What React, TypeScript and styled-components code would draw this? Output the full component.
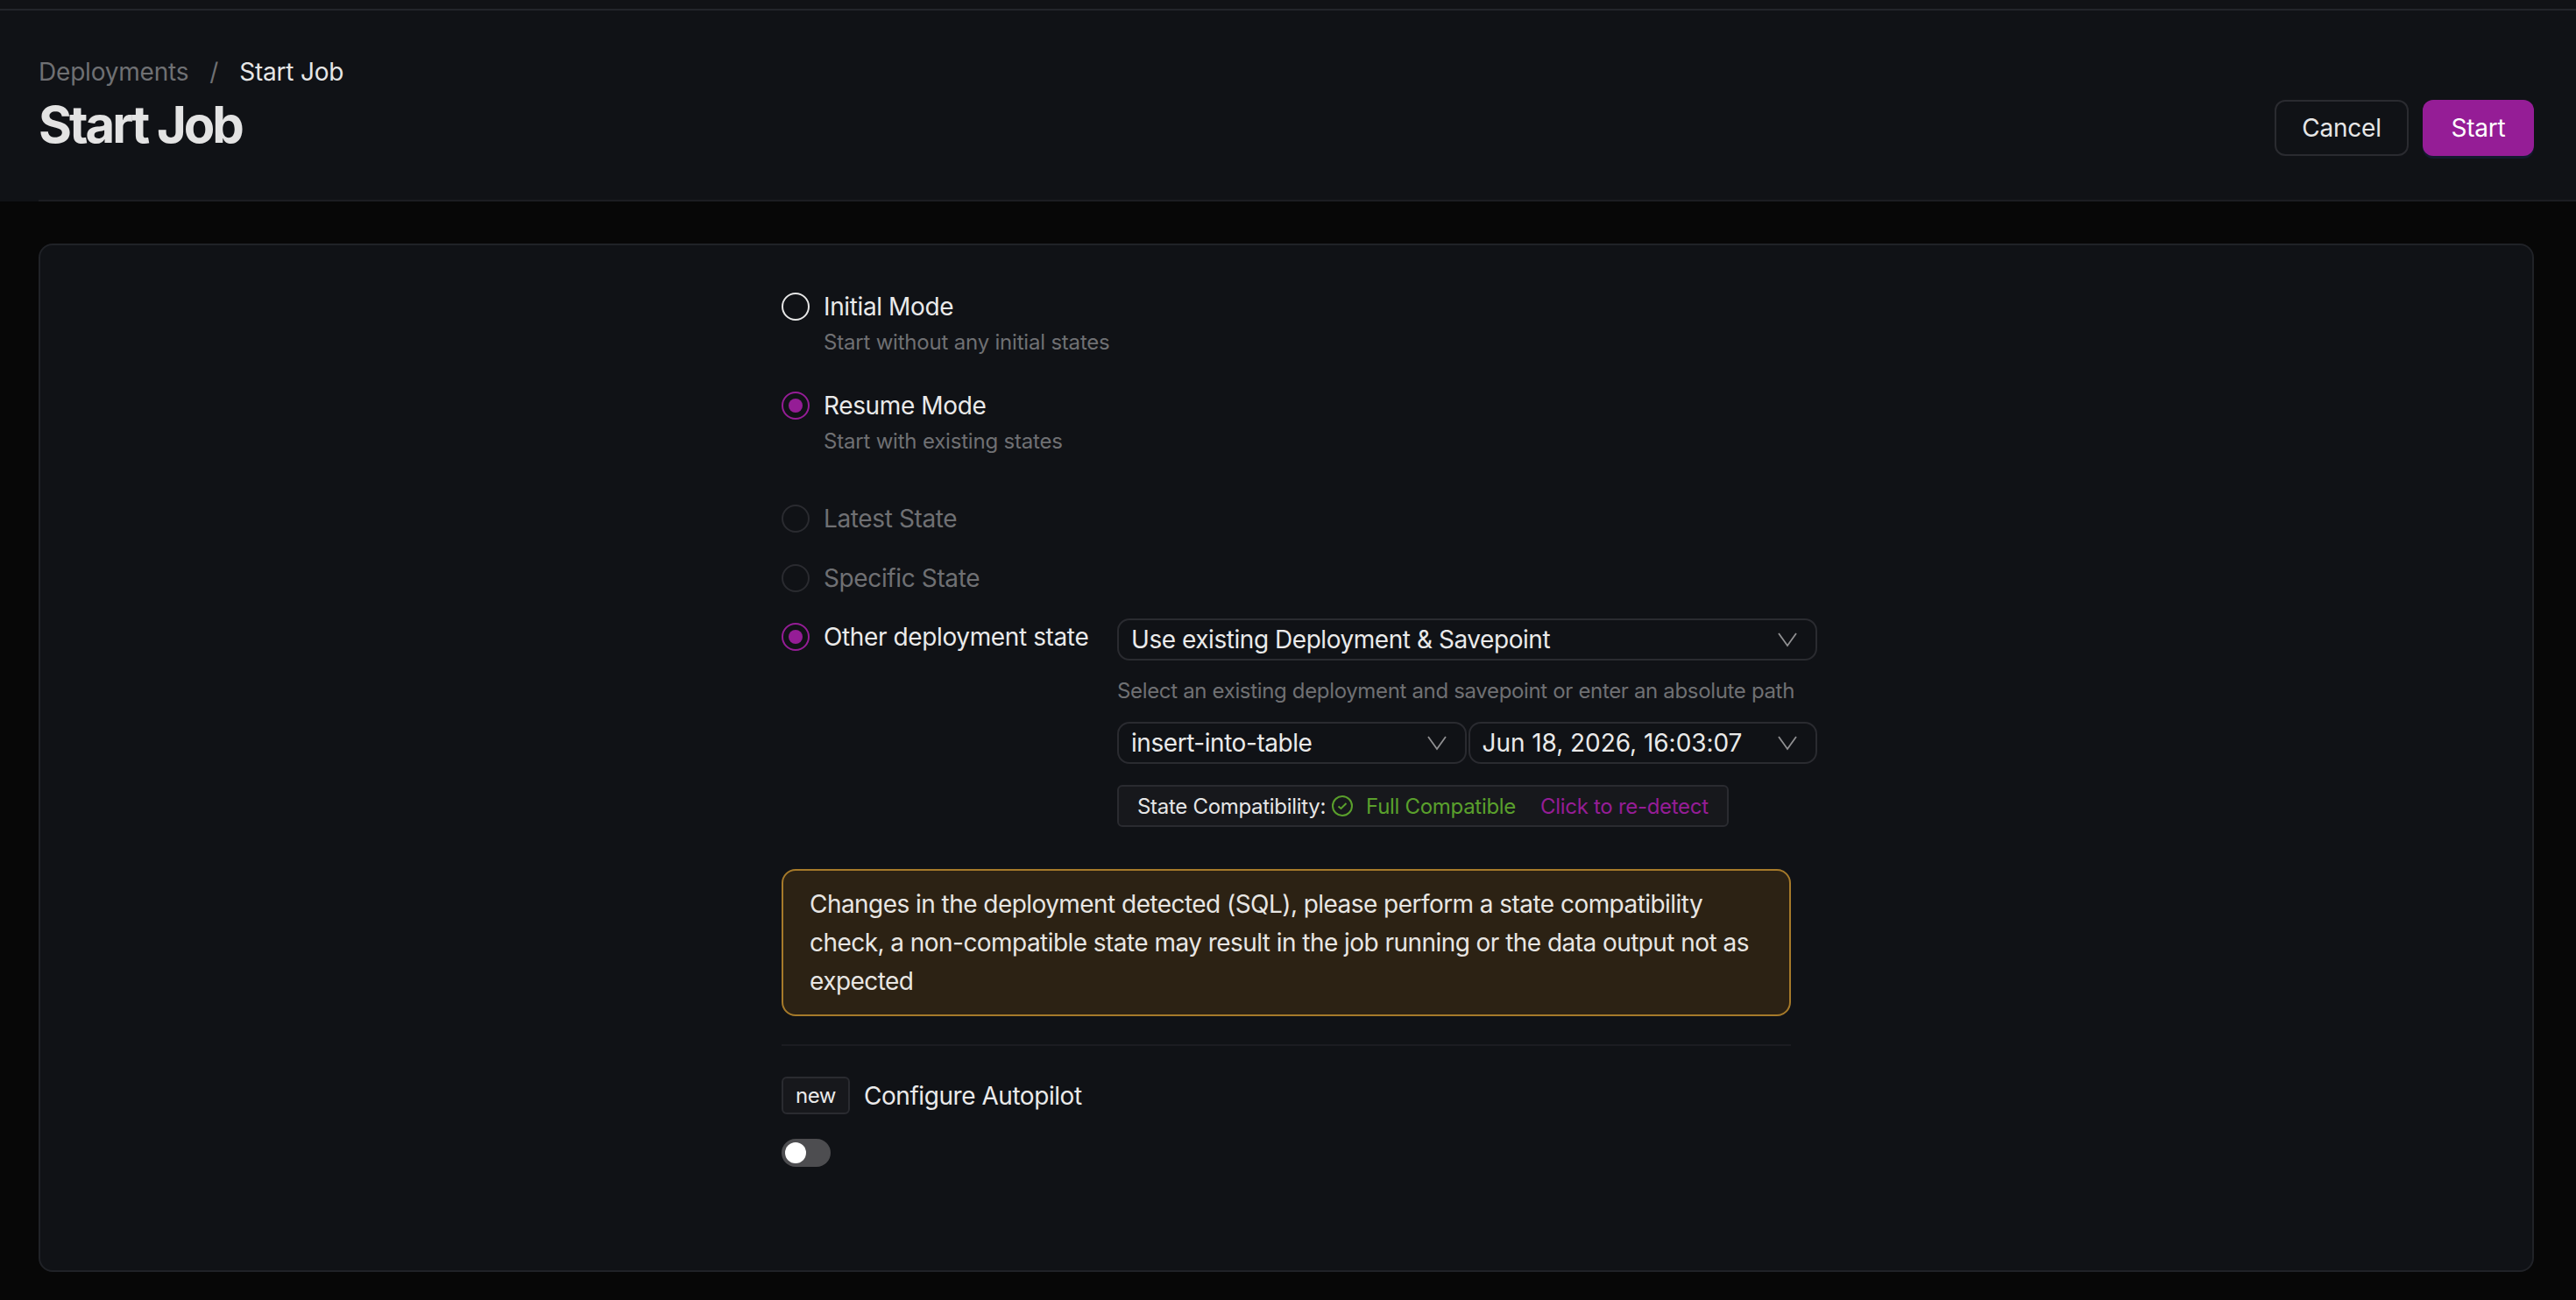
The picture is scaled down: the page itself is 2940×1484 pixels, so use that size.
import styled, { createGlobalStyle } from "styled-components";

const purple = "#951d96";
const borderColor = "#2a2b30";
const muted = "#6f7073";

const GlobalStyle = createGlobalStyle`
  html, body {
    margin: 0;
    padding: 0;
    background: #070707;
  }
  * {
    box-sizing: border-box;
  }
`;

const Page = styled.div`
  width: 2940px;
  height: 1484px;
  display: flex;
  flex-direction: column;
  overflow: hidden;
  background: #070707;
  color: #e6e6e6;
  font-family: Inter, "Liberation Sans", sans-serif;
  letter-spacing: -0.2px;
`;

const TopStrip = styled.div`
  flex: none;
  height: 12px;
  background: #111216;
  border-bottom: 2px solid #23252b;
`;

const Header = styled.header`
  flex: none;
  height: 218px;
  background: #101216;
  padding-left: 44px;
`;

const HeaderInner = styled.div`
  height: 100%;
  display: flex;
  align-items: flex-start;
  justify-content: space-between;
  padding: 50px 48px 0 0;
  border-bottom: 2px solid #1c1d22;
`;

const TitleBlock = styled.div`
  display: flex;
  flex-direction: column;
`;

const Breadcrumb = styled.div`
  display: flex;
  align-items: center;
  height: 40px;
  font-size: 28px;
`;

const Crumb = styled.span<{ $current?: boolean }>`
  color: ${(p) => (p.$current ? "#e6e6e6" : muted)};
`;

const CrumbSep = styled.span`
  color: ${muted};
  margin: 0 24px;
`;

const Title = styled.h1`
  margin: 4px 0 0;
  font-size: 58px;
  line-height: 72px;
  font-weight: 700;
  letter-spacing: -3px;
  color: #e3e3e3;
`;

const Actions = styled.div`
  display: flex;
  gap: 16px;
  margin-top: 52px;
`;

const Button = styled.button<{ $primary?: boolean }>`
  height: 64px;
  padding: 0;
  width: ${(p) => (p.$primary ? "127px" : "153px")};
  border-radius: 12px;
  font-family: inherit;
  font-size: 28px;
  letter-spacing: -0.2px;
  color: ${(p) => (p.$primary ? "#ffffff" : "#e6e6e6")};
  background: ${(p) => (p.$primary ? purple : "transparent")};
  border: ${(p) => (p.$primary ? "none" : `2px solid ${borderColor}`)};
  box-shadow: ${(p) => (p.$primary ? "0 3px 0 #131a2e" : "none")};
`;

const Main = styled.main`
  flex: 1;
  display: flex;
  min-height: 0;
  padding: 48px 48px 32px 44px;
`;

const Card = styled.section`
  flex: 1;
  background: #101216;
  border: 2px solid #202227;
  border-radius: 16px;
  padding-top: 48px;
`;

const Form = styled.div`
  width: 1152px;
  margin: 0 auto;
`;

const OptionRow = styled.label<{ $gap?: number }>`
  display: flex;
  align-items: center;
  height: 44px;
  margin-top: ${(p) => p.$gap ?? 0}px;
`;

const Radio = styled.span<{ $state: "off" | "on" | "disabled" }>`
  flex: none;
  width: 32px;
  height: 32px;
  border-radius: 50%;
  margin-right: 16px;
  display: flex;
  align-items: center;
  justify-content: center;
  border: 2px solid
    ${(p) => (p.$state === "on" ? purple : p.$state === "disabled" ? borderColor : "#e6e6e6")};
  &::after {
    content: "";
    display: ${(p) => (p.$state === "on" ? "block" : "none")};
    width: 16px;
    height: 16px;
    border-radius: 50%;
    background: ${purple};
  }
`;

const OptionLabel = styled.span<{ $disabled?: boolean }>`
  font-size: 28px;
  letter-spacing: -0.38px;
  color: ${(p) => (p.$disabled ? muted : "#eaeaea")};
`;

const OptionHint = styled.div`
  height: 36px;
  line-height: 36px;
  margin-left: 48px;
  margin-top: 1px;
  font-size: 24px;
  color: ${muted};
`;

const OtherRow = styled.div`
  display: flex;
  align-items: flex-start;
  margin-top: 23px;
`;

const OtherLabelCell = styled.div`
  flex: none;
  width: 383px;
`;

const StateColumn = styled.div`
  flex: none;
  width: 799px;
  margin-top: 1px;
`;

const Select = styled.div<{ $half?: boolean }>`
  flex: ${(p) => (p.$half ? "1 1 0" : "none")};
  height: 48px;
  padding: 0 20px 0 14px;
  display: flex;
  align-items: center;
  justify-content: space-between;
  border: 2px solid ${borderColor};
  border-radius: 14px;
  font-size: 28px;
  letter-spacing: -0.45px;
  color: #eaeaea;
`;

const DateValue = styled.span`
  letter-spacing: -0.05px;
`;

const Chevron = styled.svg`
  flex: none;
  width: 24px;
  height: 24px;
  color: #909092;
`;

const SelectHint = styled.div`
  height: 36px;
  line-height: 36px;
  margin: 17px 0;
  font-size: 24px;
  letter-spacing: -0.34px;
  color: ${muted};
`;

const SelectPair = styled.div`
  display: flex;
  gap: 2px;
`;

const CompatBox = styled.div`
  width: 698px;
  height: 48px;
  margin-top: 24px;
  padding: 0 21px;
  display: flex;
  align-items: center;
  background: #17181c;
  border: 2px solid ${borderColor};
  border-radius: 6px;
  font-size: 24px;
  letter-spacing: -0.3px;
  color: #e6e6e6;
  white-space: nowrap;
`;

const CheckIcon = styled.svg`
  flex: none;
  width: 24px;
  height: 24px;
  margin: 0 15px 0 7px;
  color: #5aa02c;
`;

const CompatResult = styled.span`
  color: #5aa02c;
`;

const Redetect = styled.span`
  color: ${purple};
  margin-left: 28px;
`;

const Alert = styled.div`
  margin-top: 48px;
  padding: 16px 30px;
  background: #2c2214;
  border: 2px solid #a67a2a;
  border-radius: 16px;
  font-size: 28px;
  line-height: 44px;
  letter-spacing: -0.55px;
  color: #e8e6e3;
`;

const Divider = styled.hr`
  margin: 32px 0 35px;
  height: 2px;
  border: none;
  background: #1b1c21;
`;

const AutopilotRow = styled.div`
  display: flex;
  align-items: center;
  gap: 16px;
  font-size: 28px;
  letter-spacing: -0.45px;
  color: #eaeaea;
`;

const NewBadge = styled.span`
  width: 78px;
  height: 43px;
  display: flex;
  align-items: center;
  justify-content: center;
  background: #17181c;
  border: 2px solid ${borderColor};
  border-radius: 6px;
  font-size: 24px;
`;

const Toggle = styled.div`
  width: 56px;
  height: 32px;
  margin-top: 28px;
  padding: 4px;
  border-radius: 16px;
  background: #4d4d50;
  &::after {
    content: "";
    display: block;
    width: 24px;
    height: 24px;
    border-radius: 50%;
    background: #ffffff;
  }
`;

const ChevronDown = () => (
  <Chevron viewBox="0 0 24 24" fill="none" stroke="currentColor" strokeWidth="1.8">
    <path d="M2 5l10 14 10-14" />
  </Chevron>
);

function App() {
  return (
    <Page>
      <GlobalStyle />
      <TopStrip />
      <Header>
        <HeaderInner>
          <TitleBlock>
            <Breadcrumb>
              <Crumb>Deployments</Crumb>
              <CrumbSep>/</CrumbSep>
              <Crumb $current>Start Job</Crumb>
            </Breadcrumb>
            <Title>Start Job</Title>
          </TitleBlock>
          <Actions>
            <Button>Cancel</Button>
            <Button $primary>Start</Button>
          </Actions>
        </HeaderInner>
      </Header>
      <Main>
        <Card>
          <Form>
            <OptionRow>
              <Radio $state="off" />
              <OptionLabel>Initial Mode</OptionLabel>
            </OptionRow>
            <OptionHint>Start without any initial states</OptionHint>

            <OptionRow $gap={32}>
              <Radio $state="on" />
              <OptionLabel>Resume Mode</OptionLabel>
            </OptionRow>
            <OptionHint>Start with existing states</OptionHint>

            <OptionRow $gap={48}>
              <Radio $state="disabled" />
              <OptionLabel $disabled>Latest State</OptionLabel>
            </OptionRow>
            <OptionRow $gap={24}>
              <Radio $state="disabled" />
              <OptionLabel $disabled>Specific State</OptionLabel>
            </OptionRow>

            <OtherRow>
              <OtherLabelCell>
                <OptionRow>
                  <Radio $state="on" />
                  <OptionLabel>Other deployment state</OptionLabel>
                </OptionRow>
              </OtherLabelCell>
              <StateColumn>
                <Select>
                  Use existing Deployment &amp; Savepoint
                  <ChevronDown />
                </Select>
                <SelectHint>
                  Select an existing deployment and savepoint or enter an absolute path
                </SelectHint>
                <SelectPair>
                  <Select $half>
                    insert-into-table
                    <ChevronDown />
                  </Select>
                  <Select $half>
                    <DateValue>Jun 18, 2026, 16:03:07</DateValue>
                    <ChevronDown />
                  </Select>
                </SelectPair>
                <CompatBox>
                  State Compatibility:
                  <CheckIcon viewBox="0 0 24 24" fill="none" stroke="currentColor" strokeWidth="2">
                    <circle cx="12" cy="12" r="11" />
                    <path d="M7.5 12.5l3 2.5 6-6" />
                  </CheckIcon>
                  <CompatResult>Full Compatible</CompatResult>
                  <Redetect>Click to re-detect</Redetect>
                </CompatBox>
              </StateColumn>
            </OtherRow>

            <Alert>
              Changes in the deployment detected (SQL), please perform a state compatibility check,
              a non-compatible state may result in the job running or the data output not as
              expected
            </Alert>
            <Divider />
            <AutopilotRow>
              <NewBadge>new</NewBadge>
              Configure Autopilot
            </AutopilotRow>
            <Toggle />
          </Form>
        </Card>
      </Main>
    </Page>
  );
}

export default App;
